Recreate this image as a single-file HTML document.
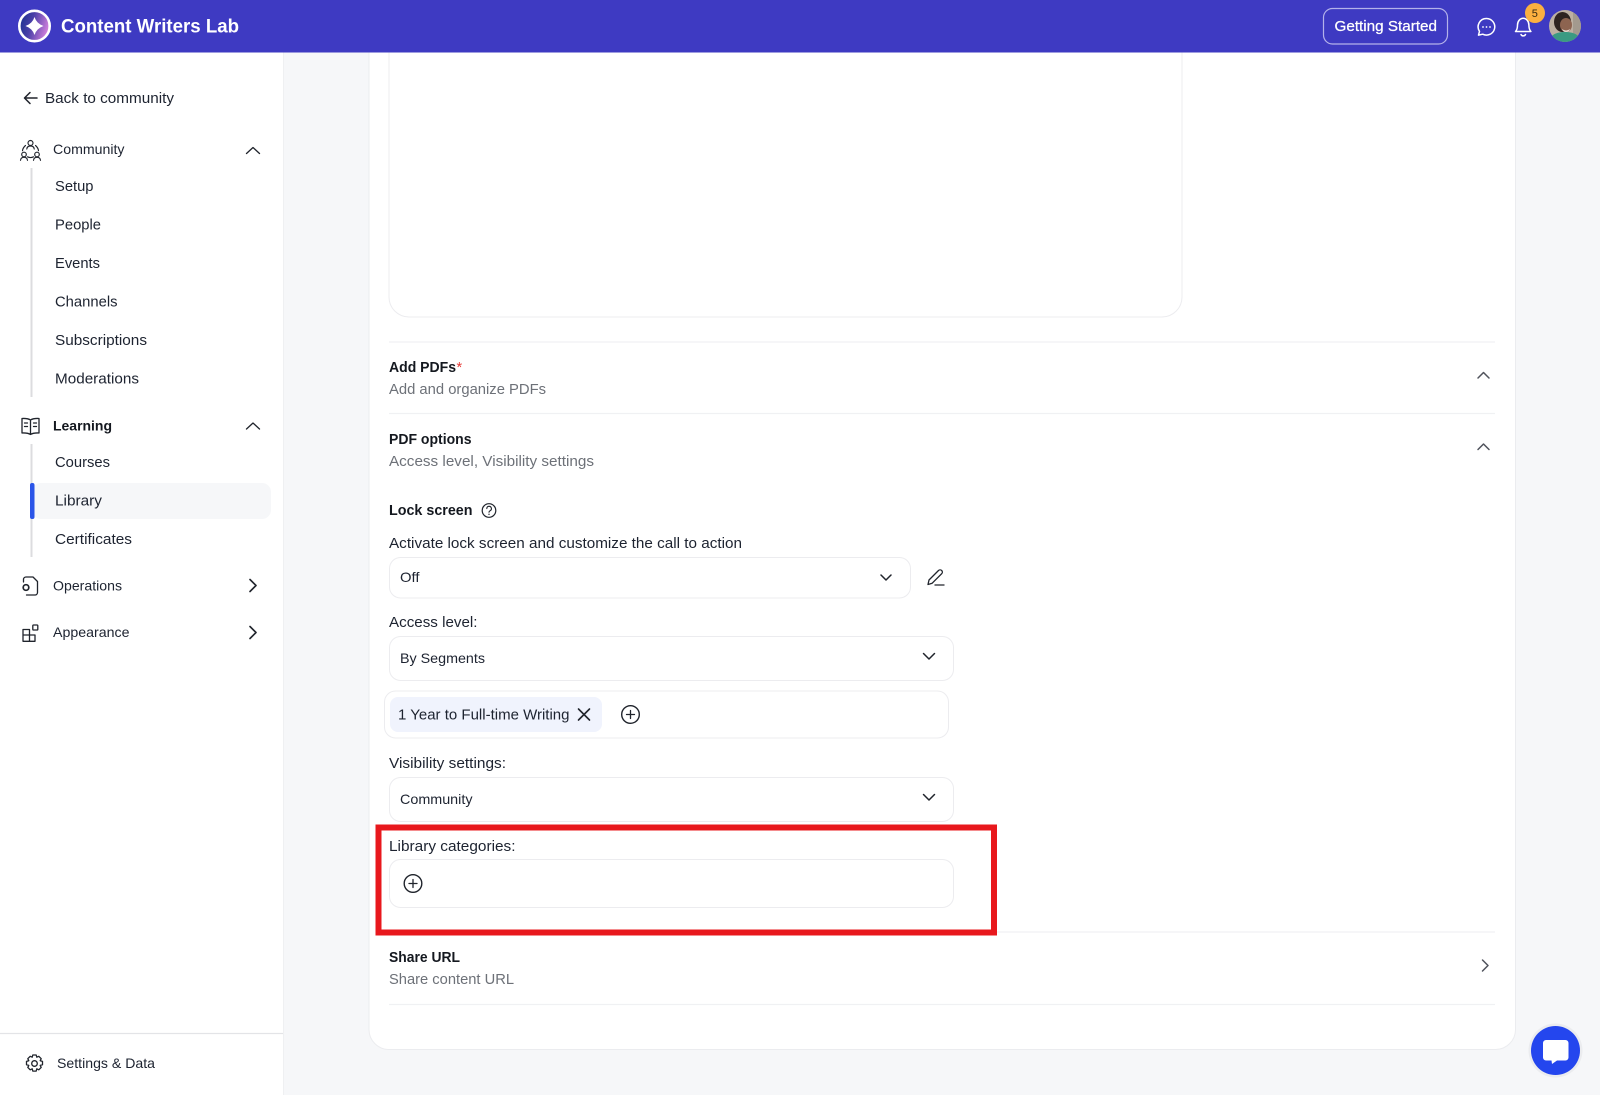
<!DOCTYPE html>
<html lang="en">
<head>
<meta charset="utf-8">
<title>Content Writers Lab</title>
<style>
html,body{margin:0;padding:0;width:1600px;height:1095px;overflow:hidden;background:#f6f7f9}
svg{display:block;filter:blur(.3px)}
text{font-family:"Liberation Sans",sans-serif;font-size:14.5px;fill:#1d2330}
.b{font-weight:700;fill:#14181f}
.m{fill:#6d7178}
.ic{fill:none;stroke:#20242c;stroke-width:1.5;stroke-linecap:round;stroke-linejoin:round}
.box{fill:#fff;stroke:#ececef;stroke-width:1}
.ln{stroke:#f0f1f3;stroke-width:1.2}
</style>
</head>
<body>
<svg width="1600" height="1095" viewBox="0 0 1600 1095" xmlns="http://www.w3.org/2000/svg">
<defs>
<linearGradient id="lg" x1="0" y1="0.1" x2="1" y2="0.4"><stop offset="0" stop-color="#16308c"/><stop offset=".45" stop-color="#4a3fa8"/><stop offset="1" stop-color="#cf7fdc"/></linearGradient>
<clipPath id="avc"><circle cx="1565" cy="26" r="16"/></clipPath>
</defs>

<!-- page / card -->
<rect width="1600" height="1095" fill="#f6f7f9"/>
<rect x="369" y="30" width="1146.500" height="1019.500" rx="20" fill="#fff" stroke="#ebecef"/>
<rect x="389" y="20" width="793" height="297" rx="20" class="box"/>

<!-- sidebar -->
<rect x="0" y="52" width="283" height="1043" fill="#fff"/>
<line x1="283.500" y1="52" x2="283.500" y2="1095" stroke="#eff0f2"/>
<line x1="0" y1="1033.500" x2="283" y2="1033.500" stroke="#e3e4e7" stroke-width="1.200"/>

<!-- header -->
<rect width="1600" height="52.500" fill="#3e3ac2"/>
<circle cx="34.500" cy="26" r="15.200" fill="url(#lg)" stroke="#fff" stroke-width="2.600"/>
<path d="M34.500 17Q36.500 23.500 43.500 26Q36.500 28.500 34.500 35Q32.500 28.500 25.500 26Q32.500 23.500 34.500 17Z" fill="#fff"/>
<text x="61" y="32.500" textLength="178" lengthAdjust="spacingAndGlyphs" style="font-size:19px;font-weight:700;fill:#fff">Content Writers Lab</text>
<rect x="1323.500" y="8.500" width="124" height="35.500" rx="9" fill="none" stroke="#b4b2ea" stroke-width="1.200"/>
<text x="1334.500" y="31" textLength="102.500" lengthAdjust="spacingAndGlyphs" style="font-size:14.500px;font-weight:400;fill:#fff;stroke:#fff;stroke-width:.25">Getting Started</text>
<path d="M1486.500 18.500a8.300 8.300 0 1 1-3.800 15.700l-4.200.9 1-3.700a8.300 8.300 0 0 1 7-12.900Z" fill="none" stroke="#fff" stroke-width="1.500" stroke-linejoin="round"/>
<circle cx="1483" cy="27" r=".9" fill="#fff"/><circle cx="1486.500" cy="27" r=".9" fill="#fff"/><circle cx="1490" cy="27" r=".9" fill="#fff"/>
<path d="M1515.500 31.500c1.700-1.700 2-3.300 2-6.500c0-3.600 2.500-6.800 5.700-6.800s5.700 3.200 5.700 6.800c0 3.200.4 4.800 2 6.500Z M1521 34.500a2.500 2.500 0 0 0 4.500 0" fill="none" stroke="#fff" stroke-width="1.500" stroke-linejoin="round" stroke-linecap="round"/>
<circle cx="1535" cy="13" r="10" fill="#fbb040"/>
<text x="1531.800" y="17" style="font-size:11px;fill:#3a2b10">5</text>
<g clip-path="url(#avc)">
<rect x="1549" y="10" width="32" height="32" fill="#bdb0a2"/>
<rect x="1573" y="10" width="8" height="32" fill="#a39a8e"/>
<ellipse cx="1562.500" cy="22" rx="8.500" ry="10" fill="#2e2320"/>
<ellipse cx="1566" cy="25" rx="6" ry="7" fill="#8d6450"/>
<path d="M1562 29q4 3 8 0q-1 3-4 3t-4-3Z" fill="#e6d9d0"/>
<path d="M1549 42c1-7 7-10 16-10s15 3 16 10Z" fill="#3a9a82"/>
</g>

<!-- sidebar items -->
<path class="ic" d="M37 98H24.500M30 92.500L24.500 98L30 103.500"/>
<text x="45" y="103" textLength="129" lengthAdjust="spacingAndGlyphs" style="font-size:14.500px">Back to community</text>

<!-- community icon -->
<g class="ic" style="stroke-width:1.150">
<circle cx="30.500" cy="143" r="2.500"/>
<path d="M26.800 149c.2-2 1.700-3 3.700-3s3.500 1 3.700 3"/>
<path d="M25.500 145.500c-1.800 1.500-2.800 3.300-3 5.200M35.500 145.500c1.800 1.500 2.800 3.300 3 5.200"/>
<circle cx="24" cy="154.500" r="2.300"/><circle cx="37" cy="154.500" r="2.300"/>
<path d="M20.500 160.300c.2-2 1.600-3 3.500-3s3.300 1 3.500 3M33.500 160.300c.2-2 1.600-3 3.500-3s3.300 1 3.500 3M27.500 156.800c2 1 4 1 6 0"/>
</g>
<text x="53" y="154" textLength="71.500" lengthAdjust="spacingAndGlyphs" style="font-size:14px">Community</text>
<path class="ic" d="M246.500 153.500L253 147.500L259.500 153.500" style="stroke-width:1.300"/>
<rect x="30.500" y="168" width="2" height="229" fill="#dcdcdf"/>
<text x="55" y="191" textLength="38.500" lengthAdjust="spacingAndGlyphs">Setup</text>
<text x="55" y="229.500" textLength="46" lengthAdjust="spacingAndGlyphs">People</text>
<text x="55" y="268" textLength="45" lengthAdjust="spacingAndGlyphs">Events</text>
<text x="55" y="306.500" textLength="62.500" lengthAdjust="spacingAndGlyphs">Channels</text>
<text x="55" y="345" textLength="92" lengthAdjust="spacingAndGlyphs">Subscriptions</text>
<text x="55" y="383.500" textLength="84" lengthAdjust="spacingAndGlyphs">Moderations</text>

<!-- learning -->
<path class="ic" d="M30.500 420c-2-1.300-5-1.700-8.500-1.500v14.500c3.500-.2 6.500.2 8.500 1.500c2-1.300 5-1.700 8.500-1.500V418.500c-3.500-.2-6.500.2-8.500 1.500ZM30.500 420V434.500M24.500 423h3M24.500 426.500h3M33.500 423h3M33.500 426.500h3" style="stroke-width:1.300"/>
<text x="53" y="430.500" textLength="59" lengthAdjust="spacingAndGlyphs" class="b" style="font-size:14px">Learning</text>
<path class="ic" d="M246.500 429L253 423L259.500 429" style="stroke-width:1.300"/>
<rect x="30.500" y="444" width="2" height="113" fill="#dcdcdf"/>
<rect x="32" y="483" width="239" height="36" rx="9" fill="#f6f7f9"/>
<rect x="30" y="483" width="4.500" height="36" rx="2" fill="#2b55e8"/>
<text x="55" y="467" textLength="55" lengthAdjust="spacingAndGlyphs">Courses</text>
<text x="55" y="505.500" textLength="47" lengthAdjust="spacingAndGlyphs">Library</text>
<text x="55" y="544" textLength="77" lengthAdjust="spacingAndGlyphs">Certificates</text>

<!-- operations -->
<path class="ic" d="M23.500 582v-2.500a2.500 2.500 0 0 1 2.500-2.500h7l4.500 4.500v11a2.500 2.500 0 0 1-2.500 2.500h-8.500" style="stroke-width:1.300"/>
<circle class="ic" cx="26" cy="587.500" r="2.800" style="stroke-width:1.700"/>
<text x="53" y="590.500" textLength="69" lengthAdjust="spacingAndGlyphs" style="font-size:14px">Operations</text>
<path class="ic" d="M250 579.500L256 585.500L250 591.500" style="stroke-width:1.600"/>

<!-- appearance -->
<g class="ic" style="stroke-width:1.300">
<path d="M23 629.500h6.500v5.500h5.500v6.300h-12Z M23 635h12M29.500 635v6.300"/>
<rect x="32.800" y="625" width="5" height="5" rx=".8"/>
</g>
<text x="53" y="637" textLength="76.500" lengthAdjust="spacingAndGlyphs" style="font-size:14px">Appearance</text>
<path class="ic" d="M250 626.500L256 632.500L250 638.500" style="stroke-width:1.600"/>

<!-- settings -->
<g class="ic" style="stroke-width:1.300">
<circle cx="34.500" cy="1063.500" r="2.800"/>
<path d="M32.800 1055h3.400l.6 2.200l2-.9l2.400 2.400l-1 2l2.300.7v3.300l-2.300.7l1 2l-2.400 2.400l-2-1l-.6 2.300h-3.400l-.6-2.300l-2 1l-2.400-2.400l1-2l-2.300-.7v-3.300l2.300-.7l-1-2l2.400-2.400l2 .9Z"/>
</g>
<text x="57" y="1068" textLength="98" lengthAdjust="spacingAndGlyphs" style="font-size:14px">Settings &amp; Data</text>

<!-- main lines -->
<line class="ln" x1="389" y1="342" x2="1495" y2="342"/>
<line class="ln" x1="389" y1="413.500" x2="1495" y2="413.500"/>
<line class="ln" x1="389" y1="932" x2="1495" y2="932"/>
<line class="ln" x1="389" y1="1004.500" x2="1495" y2="1004.500"/>

<text x="389" y="372" textLength="67" lengthAdjust="spacingAndGlyphs" class="b" style="font-size:14.500px">Add PDFs</text>
<text x="456.500" y="372" style="font-size:14.500px;fill:#e53935">*</text>
<text x="389" y="394" textLength="157" lengthAdjust="spacingAndGlyphs" class="m">Add and organize PDFs</text>
<path d="M1478 378L1483.500 372.500L1489 378" fill="none" stroke="#50535c" stroke-width="1.500" stroke-linecap="round" stroke-linejoin="round"/>

<text x="389" y="444" textLength="82.500" lengthAdjust="spacingAndGlyphs" class="b" style="font-size:14.500px">PDF options</text>
<text x="389" y="466" textLength="205" lengthAdjust="spacingAndGlyphs" class="m">Access level, Visibility settings</text>
<path d="M1478 449.500L1483.500 444L1489 449.500" fill="none" stroke="#50535c" stroke-width="1.500" stroke-linecap="round" stroke-linejoin="round"/>

<text x="389" y="515" textLength="83.500" lengthAdjust="spacingAndGlyphs" class="b" style="font-size:14.500px">Lock screen</text>
<circle class="ic" cx="489" cy="510.500" r="6.800" style="stroke-width:1.200"/>
<path class="ic" d="M486.800 508.600a2.300 2.300 0 1 1 3.300 2.100c-.8.400-1.100.9-1.100 1.500" style="stroke-width:1.100"/>
<circle cx="489" cy="514.300" r=".7" fill="#20242c"/>

<text x="389" y="548" textLength="353" lengthAdjust="spacingAndGlyphs">Activate lock screen and customize the call to action</text>

<rect x="389.500" y="557.500" width="521" height="40.500" rx="11" class="box"/>
<text x="400" y="582" textLength="19.500" lengthAdjust="spacingAndGlyphs" style="font-size:14px">Off</text>
<path class="ic" d="M881 575L886 580L891 575" style="stroke-width:1.500"/>
<path class="ic" d="M928 584.500l1-4.500l9.500-9.500a2.200 2.200 0 0 1 3.200 3.200l-9.500 9.500ZM935 585h9" style="stroke-width:1.300"/>

<text x="389" y="627" textLength="88.500" lengthAdjust="spacingAndGlyphs">Access level:</text>
<rect x="389.500" y="636.500" width="564" height="44" rx="11" class="box"/>
<text x="400" y="663" textLength="85" lengthAdjust="spacingAndGlyphs" style="font-size:14px">By Segments</text>
<path class="ic" d="M923.500 653.500L929 659L934.500 653.500" style="stroke-width:1.500"/>

<rect x="384.500" y="691" width="564" height="47" rx="11" class="box"/>
<rect x="390" y="697" width="212" height="35" rx="8" fill="#f0f3fd"/>
<text x="398" y="719.500" textLength="171.500" lengthAdjust="spacingAndGlyphs" style="font-size:14.500px">1 Year to Full-time Writing</text>
<path class="ic" d="M578.500 709L589.500 720M589.500 709L578.500 720" style="stroke-width:1.600"/>
<circle class="ic" cx="630.500" cy="714.500" r="8.800" style="stroke-width:1.400"/>
<path class="ic" d="M630.500 710.500v8M626.500 714.500h8" style="stroke-width:1.300"/>

<text x="389" y="768" textLength="117" lengthAdjust="spacingAndGlyphs">Visibility settings:</text>
<rect x="389.500" y="777.500" width="564" height="44" rx="11" class="box"/>
<text x="400" y="804" textLength="72.500" lengthAdjust="spacingAndGlyphs" style="font-size:14px">Community</text>
<path class="ic" d="M923.500 794.500L929 800L934.500 794.500" style="stroke-width:1.500"/>

<rect x="378.500" y="827.500" width="615.500" height="105" fill="none" stroke="#e8181d" stroke-width="6"/>
<text x="389" y="851" textLength="126.500" lengthAdjust="spacingAndGlyphs">Library categories:</text>
<rect x="389.500" y="859.500" width="564" height="48" rx="11" class="box"/>
<circle class="ic" cx="413" cy="883.500" r="8.800" style="stroke-width:1.400"/>
<path class="ic" d="M413 879.500v8M409 883.500h8" style="stroke-width:1.300"/>

<text x="389" y="962" textLength="71" lengthAdjust="spacingAndGlyphs" class="b" style="font-size:14.500px">Share URL</text>
<text x="389" y="984" textLength="125" lengthAdjust="spacingAndGlyphs" class="m">Share content URL</text>
<path d="M1482.500 960L1488 965.500L1482.500 971" fill="none" stroke="#50535c" stroke-width="1.500" stroke-linecap="round" stroke-linejoin="round"/>

<!-- chat bubble -->
<circle cx="1555.500" cy="1050.500" r="27" fill="#1f1f3a" opacity=".05"/>
<circle cx="1555.500" cy="1050.500" r="24.500" fill="#2446ee"/>
<path d="M1546 1040h19.500a3 3 0 0 1 3 3v14.500a3 3 0 0 1-3 3h-8.500l-5 3.500l-.5-3.500h-5.500a3 3 0 0 1-3-3V1043a3 3 0 0 1 3-3Z" fill="#fff"/>
</svg>
</body>
</html>
